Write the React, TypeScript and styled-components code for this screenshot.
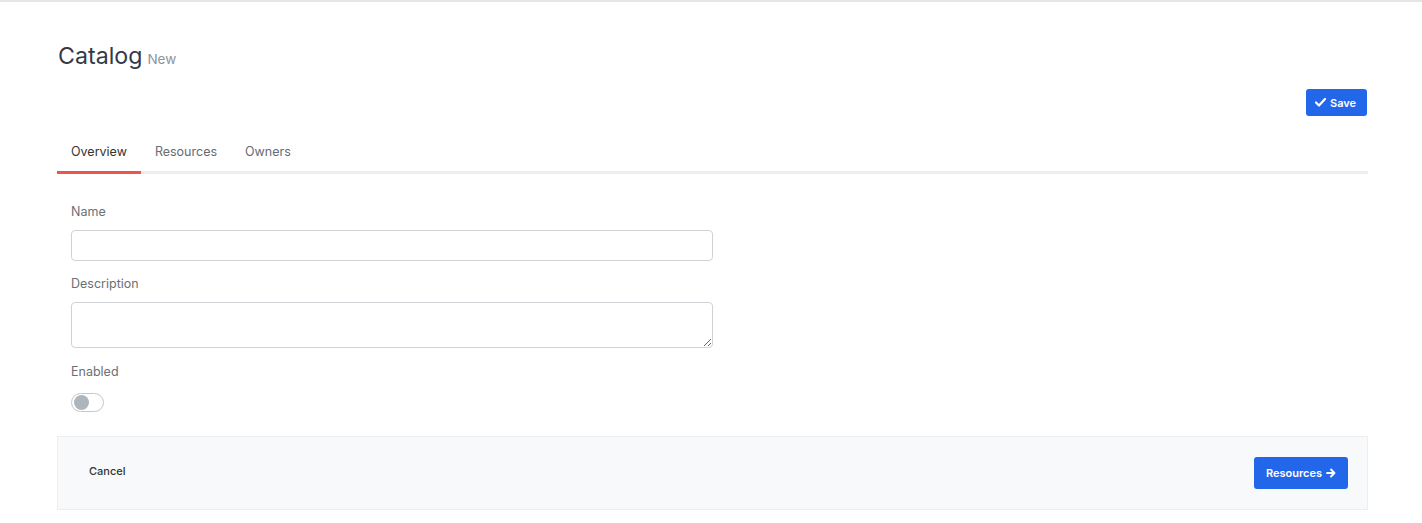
import React from "react";
import styled, { createGlobalStyle } from "styled-components";

const Global = createGlobalStyle`
  html, body { margin: 0; padding: 0; background: #fff; }
  body { font-family: Inter, "Noto Sans", Arial, sans-serif; color: #333; }
  * { box-sizing: border-box; }
`;

const Page = styled.div`
  border-top: 2px solid #e6e6e6;
  padding: 0 54px 0 57px;
  min-height: 523px;
`;

const Header = styled.div`
  display: flex;
  align-items: baseline;
  gap: 5px;
  padding-top: 38px;
  padding-left: 1px;
  height: 87px;
`;

const Title = styled.h1`
  margin: 0;
  font-size: 23.2px;
  font-weight: 400;
  color: #333a47;
  line-height: 32px;
`;

const Subtitle = styled.span`
  font-size: 13.5px;
  color: #8d949e;
`;

const Actions = styled.div`
  display: flex;
  justify-content: flex-end;
  padding-right: 1px;
`;

const Button = styled.button<{ $variant?: "primary" | "link" }>`
  display: inline-flex;
  align-items: center;
  gap: 4px;
  border: none;
  border-radius: 3px;
  font-family: Inter, "Noto Sans", Arial, sans-serif;
  font-size: 11px;
  font-weight: 600;
  cursor: pointer;
  background: ${(p) => (p.$variant === "link" ? "transparent" : "#2266ea")};
  color: ${(p) => (p.$variant === "link" ? "#333" : "#fff")};
`;

const SaveButton = styled(Button)`
  height: 27px;
  padding: 0 10px 0 9px;
  width: 61px;
`;

const TabBar = styled.div`
  display: flex;
  margin-top: 27px;
  border-bottom: 3px solid #eeeeee;
`;

const Tab = styled.div<{ $active?: boolean }>`
  padding: 0 14px 10px;
  margin-bottom: -3px;
  font-size: 12.5px;
  line-height: 18px;
  color: ${(p) => (p.$active ? "#333" : "#666c73")};
  border-bottom: 3px solid ${(p) => (p.$active ? "#ef5350" : "transparent")};
`;

const Form = styled.div`
  padding: 29px 14px 0;
  width: 670px;
  display: flex;
  flex-direction: column;
`;

const Label = styled.label`
  font-size: 12.5px;
  line-height: 18px;
  color: #6c6f75;
  margin-bottom: 9px;
`;

const Input = styled.input`
  height: 31px;
  width: 642px;
  border: 1px solid #cfd2d6;
  border-radius: 4px;
  margin-bottom: 14px;
`;

const TextArea = styled.textarea`
  height: 46px;
  width: 642px;
  border: 1px solid #cfd2d6;
  border-radius: 4px;
  margin-bottom: 15px;
  resize: vertical;
`;

const Toggle = styled.div`
  width: 33px;
  height: 19px;
  border: 1px solid #c4c8cc;
  border-radius: 10px;
  padding: 2px;
  display: flex;
  align-items: center;
  margin-top: 3px;
`;

const Knob = styled.div`
  width: 15px;
  height: 15px;
  border-radius: 50%;
  background: #adb5bd;
`;

const Footer = styled.div`
  margin-top: 24px;
  height: 74px;
  background: #f8f9fa;
  border: 1px solid #eceef0;
  display: flex;
  align-items: center;
  justify-content: space-between;
  padding: 0 19px 0 19px;
`;

const CancelButton = styled(Button)`
  padding: 6px 12px;
  font-weight: 500;
  margin-top: -4px;
`;

const NextButton = styled(Button)`
  height: 32px;
  padding: 0 12px;
  font-size: 11px;
  margin-top: -1px;
`;

export default function App() {
  return (
    <>
      <Global />
      <Page>
        <Header>
          <Title>Catalog</Title>
          <Subtitle>New</Subtitle>
        </Header>
        <Actions>
          <SaveButton $variant="primary">
            <svg width="11" height="9" viewBox="0 0 11 9">
              <path d="M1 4.5 L4 7.5 L10 1" fill="none" stroke="#fff" strokeWidth="2.2" strokeLinecap="round" strokeLinejoin="round" />
            </svg>
            Save
          </SaveButton>
        </Actions>
        <TabBar>
          <Tab $active>Overview</Tab>
          <Tab>Resources</Tab>
          <Tab>Owners</Tab>
        </TabBar>
        <Form>
          <Label>Name</Label>
          <Input />
          <Label>Description</Label>
          <TextArea />
          <Label>Enabled</Label>
          <Toggle>
            <Knob />
          </Toggle>
        </Form>
        <Footer>
          <CancelButton $variant="link">Cancel</CancelButton>
          <NextButton $variant="primary">
            Resources
            <svg width="10" height="10" viewBox="0 0 10 10">
              <path d="M1 5 H8.5 M5 1.5 L8.5 5 L5 8.5" fill="none" stroke="#fff" strokeWidth="1.8" strokeLinecap="round" strokeLinejoin="round" />
            </svg>
          </NextButton>
        </Footer>
      </Page>
    </>
  );
}
